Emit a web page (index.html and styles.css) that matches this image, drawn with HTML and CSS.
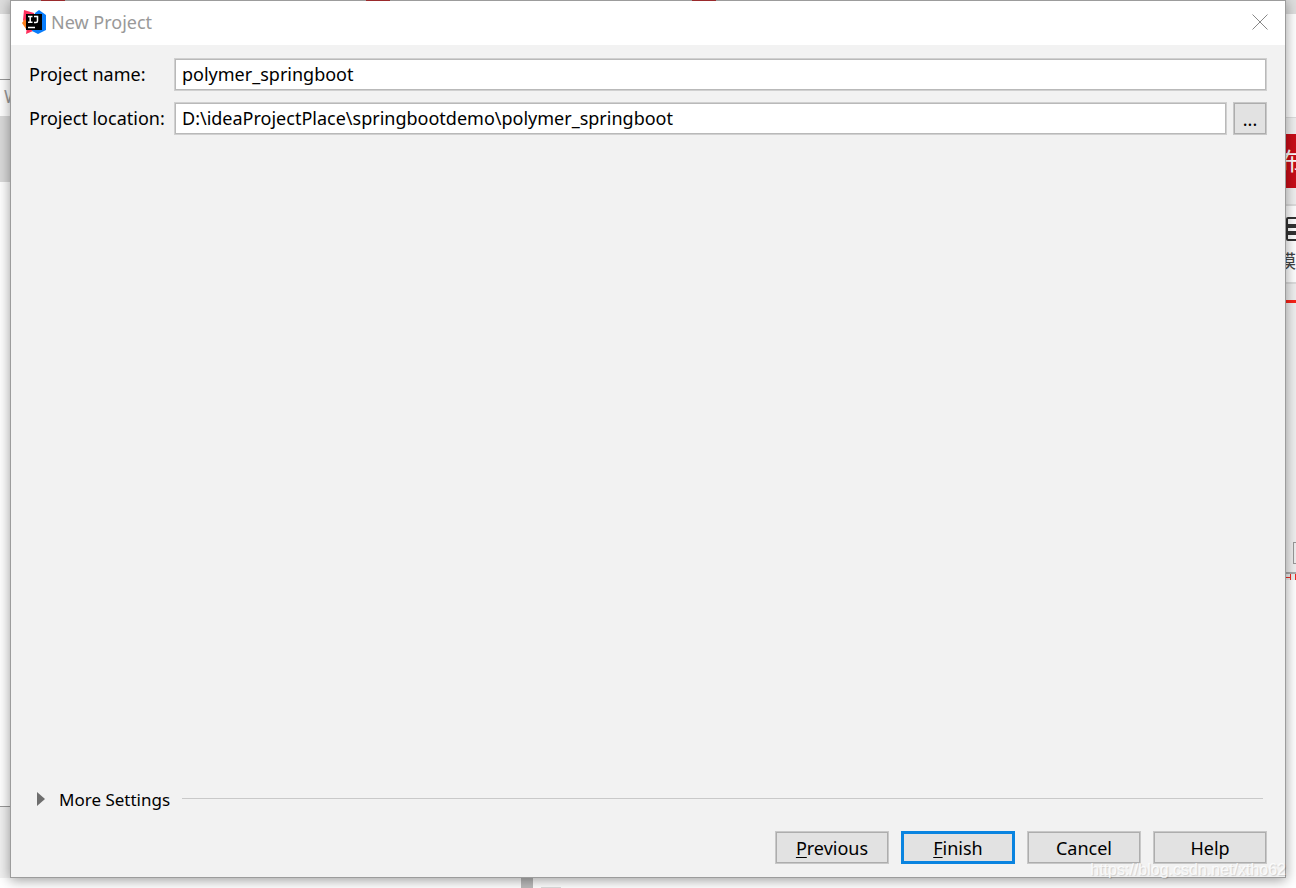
FILE: index.html
```html
<!DOCTYPE html>
<html lang="en">
<head>
  <meta charset="UTF-8">
  <meta name="viewport" content="width=device-width, initial-scale=1.0">
  <title>New Project</title>
  <link rel="stylesheet" href="styles.css">
</head>
<body>
  <div class="desktop">
    <div class="behind-left">
      <div class="left-tabs"></div>
      <div class="left-blank"></div>
      <div class="left-title">W</div>
      <div class="left-selected"></div>
      <div class="left-page"></div>
      <div class="left-bottom"></div>
    </div>

    <main class="dialog">
      <div class="top-edge"></div>
      <header class="title-bar">
        <svg class="logo" viewBox="0 0 24 24" aria-hidden="true">
          <path fill="#fe315d" d="M2 0l10 3-1 18-7 3 1-7-4-7z"/>
          <path fill="#fc801d" d="M0 13l3-4 3 7-2 3z"/>
          <path fill="#087cfa" d="M13 3l4-3 7 5v15l-8 4-6-3z"/>
          <path fill="#000" d="M4 4h16v16H4z"/>
          <path fill="none" stroke="#fff" stroke-width="1.5" d="M6 6.500h4.500M8.200 6.500v6M6 12.300h4.500M12 6.500h3.500v4.500q0 1.500-1.500 1.500h-2M6 17.500h7"/>
        </svg>
        <h1>New Project</h1>
        <button type="button" class="close" aria-label="Close">
          <svg viewBox="0 0 16 16" aria-hidden="true">
            <path fill="none" stroke="#888" d="M.5.5l15 15M15.500.5l-15 15"/>
          </svg>
        </button>
      </header>

      <form class="content">
        <div class="field">
          <label for="project-name">Project name:</label>
          <input type="text" id="project-name" value="polymer_springboot">
        </div>
        <div class="field">
          <label for="project-location">Project location:</label>
          <input type="text" id="project-location" value="D:\ideaProjectPlace\springbootdemo\polymer_springboot">
          <button type="button" class="browse" aria-label="Browse">...</button>
        </div>

        <div class="more">
          <button type="button" class="more-toggle">
            <svg viewBox="0 0 8 14" aria-hidden="true"><path fill="#6e6e6e" d="M0 0l8 7-8 7z"/></svg>
            <span>More Settings</span>
          </button>
          <span class="more-line"></span>
        </div>

        <div class="actions">
          <button type="button"><u>P</u>revious</button>
          <button type="submit" class="default"><u>F</u>inish</button>
          <button type="button">Cancel</button>
          <button type="button">Help</button>
        </div>
      </form>
    </main>

    <div class="behind-right">
      <div class="right-tabs"></div>
      <div class="right-blank"></div>
      <div class="right-gap"></div>
      <div class="right-publish">布</div>
      <div class="right-gap"></div>
      <div class="right-template">
        <svg viewBox="0 0 11 24" aria-hidden="true">
          <path fill="none" stroke="#333" stroke-width="2" d="M12 1H3q-1 0-1 1v6h10M12 10H2v5h10M12 17H2v5q0 1 1 1h9"/>
        </svg>
        <span>模</span>
      </div>
      <div class="right-gap"></div>
      <div class="right-accent"></div>
      <div class="right-panel"><span class="right-box"></span></div>
      <div class="right-marks">
        <svg viewBox="0 0 10 6" aria-hidden="true">
          <path fill="none" stroke="#f02b22" d="M0 3.500h5M4.500 0v6M9.500 0v6"/>
        </svg>
      </div>
      <div class="right-page"></div>
    </div>

    <div class="behind-bottom">
      <span class="bottom-scroll"></span>
      <span class="bottom-tab"></span>
    </div>
    <div class="watermark">https://blog.csdn.net/xtho62</div>
  </div>
</body>
</html>
```
FILE: styles.css
```css
* {
  box-sizing: border-box;
}

body {
  margin: 0;
  font-family: "Noto Sans", "Noto Sans CJK SC", sans-serif;
  font-size: 18px;
  line-height: 24px;
  color: #000;
  background: #fff;
}

button,
input {
  font: inherit;
  color: inherit;
}

.desktop {
  position: relative;
  display: grid;
  grid-template-columns: 10px 1fr 10px;
  grid-template-rows: 1fr 10px;
  min-height: 100vh;
  overflow: hidden;
}

/* window behind, left side */
.behind-left {
  display: flex;
  flex-direction: column;
  overflow: hidden;
}

.left-tabs {
  height: 14px;
  background: #dedede;
}

.left-blank {
  height: 65px;
}

.left-title {
  height: 37px;
  padding: 4px;
  border-top: 1px solid #999;
  color: #999;
}

.left-selected {
  height: 66px;
  background: #dadada;
}

.left-page {
  flex: 1;
  border-bottom: 1px solid #999;
}

.left-bottom {
  height: 71px;
  background: #f0f0f0;
}

/* dialog */
.dialog {
  position: relative;
  z-index: 1;
  display: flex;
  flex-direction: column;
  background: #f2f2f2;
  border: 1px solid #9c9c9c;
  border-top: 0;
  box-shadow: 0 2px 12px rgba(0, 0, 0, 0.4);
}

.top-edge {
  height: 1px;
  background: linear-gradient(90deg, #9c9c9c 30px, #9a2a2c 30px 54px, #9c9c9c 54px 355px, #9a2a2c 355px 379px, #9c9c9c 379px 681px, #9a2a2c 681px 705px, #9c9c9c 705px);
}

.title-bar {
  display: flex;
  align-items: center;
  height: 44px;
  padding: 0 17px 2px 11px;
  background: #fff;
}

.logo {
  width: 24px;
  height: 24px;
  margin-right: 5px;
}

.title-bar h1 {
  flex: 1;
  margin: 0;
  font-size: 18px;
  font-weight: normal;
  color: #999;
}

.close {
  display: flex;
  padding: 0;
  border: 0;
  background: none;
}

.close svg {
  width: 16px;
  height: 16px;
}

.content {
  flex: 1;
  display: flex;
  flex-direction: column;
  padding: 13px 18px;
}

.field {
  display: flex;
  align-items: center;
  height: 33px;
  margin-bottom: 11px;
}

.field label {
  width: 145px;
  padding-bottom: 2px;
}

.field input {
  flex: 1;
  min-width: 0;
  height: 33px;
  padding: 0 7px 2px;
  border: 1px solid #d0d0d0;
  background: #fff;
  box-shadow: inset 0 0 0 1px #b9b9b9;
}

.browse,
.actions button {
  height: 33px;
  padding: 0;
  border: 1px solid #c8c8c8;
  background: #e2e2e2;
  box-shadow: inset 0 0 0 1px #adadad;
}

.browse {
  width: 34px;
  margin-left: 6px;
}

.more {
  display: flex;
  align-items: center;
  margin-top: auto;
  padding: 0 4px 0 8px;
}

.more-toggle {
  display: flex;
  align-items: center;
  gap: 14px;
  padding: 0;
  border: 0;
  background: none;
  font-size: 17px;
}

.more-toggle svg {
  width: 8px;
  height: 14px;
}

.more-toggle span {
  padding-top: 3px;
}

.more-line {
  flex: 1;
  height: 1px;
  margin-left: 12px;
  background: #c9c9c9;
}

.actions {
  display: flex;
  justify-content: flex-end;
  gap: 12px;
  margin-top: 19px;
}

.actions button {
  width: 114px;
}

.actions .default {
  border: 3px solid #0a84e0;
  box-shadow: none;
}

.actions u {
  text-underline-offset: 2px;
  text-decoration-skip-ink: none;
}

/* window behind, right side */
.behind-right {
  display: flex;
  flex-direction: column;
  overflow: hidden;
}

.right-tabs {
  height: 14px;
  background: #dedede;
}

.right-blank {
  height: 104px;
  border-bottom: 1px solid #ddd;
}

.right-gap {
  height: 16px;
  background: #f0f0f0;
}

.right-publish {
  display: flex;
  justify-content: center;
  align-items: center;
  height: 54px;
  font-size: 24px;
  color: #fff;
  background: #c90d18;
}

.right-template {
  display: flex;
  flex-direction: column;
  align-items: flex-end;
  height: 80px;
  padding-top: 11px;
  border-top: 2px solid #ddd;
  border-bottom: 2px solid #ddd;
  color: #444;
}

.right-template svg {
  width: 11px;
  height: 24px;
  margin-bottom: 8px;
}

.right-accent {
  height: 3px;
  background: #fa2318;
}

.right-panel {
  display: flex;
  justify-content: flex-end;
  height: 271px;
  padding-top: 239px;
  border-bottom: 2px solid #aaa;
  background: #f0f0f0;
}

.right-box {
  width: 3px;
  height: 22px;
  border: 1px solid #999;
  border-right: 0;
}

.right-marks {
  height: 6px;
  background: #eee;
}

.right-marks svg {
  display: block;
  width: 10px;
  height: 6px;
}

.right-page {
  flex: 1;
}

/* window behind, below */
.behind-bottom {
  grid-column: 1 / -1;
  display: flex;
  align-items: flex-end;
  gap: 8px;
  padding-left: 521px;
}

.bottom-scroll {
  width: 12px;
  height: 10px;
  background: #bbb;
}

.bottom-tab {
  width: 20px;
  height: 1px;
  background: #ddd;
}

.watermark {
  position: absolute;
  z-index: 2;
  right: 10px;
  bottom: 6px;
  font-family: "Liberation Sans", sans-serif;
  font-size: 16px;
  color: rgba(255, 255, 255, 0.8);
  text-shadow: 1px 1px 1px rgba(0, 0, 0, 0.15);
}
```
